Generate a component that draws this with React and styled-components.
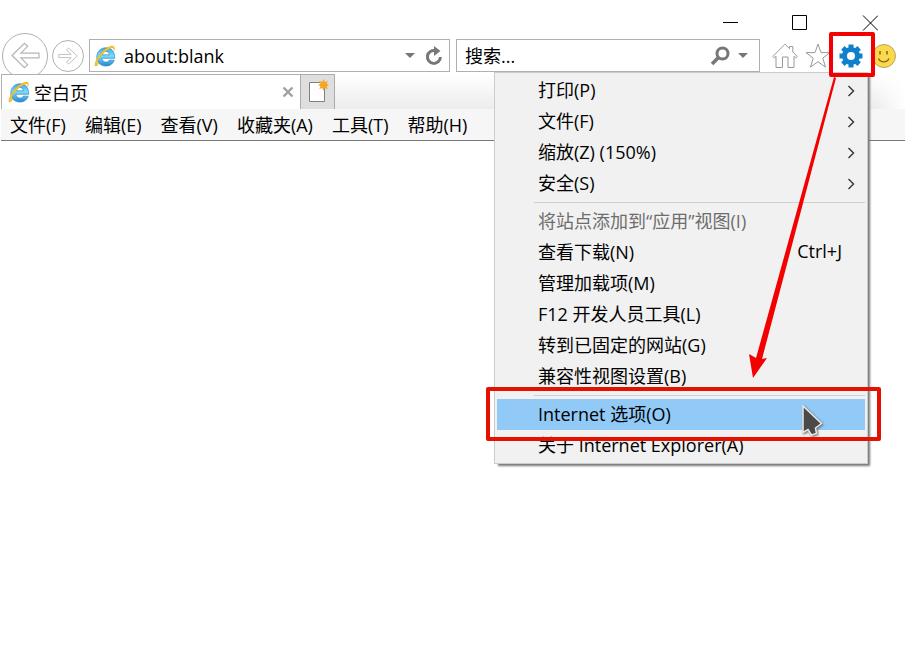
import React, { useState } from 'react';
import styled, { createGlobalStyle } from 'styled-components';

const GlobalStyle = createGlobalStyle`
  * {
    box-sizing: border-box;
  }

  body {
    margin: 0;
    background: #fff;
  }

  body, button, input {
    font-family: 'Open Sans', 'Noto Sans CJK SC', sans-serif;
    font-size: 18px;
    color: #000;
  }

  button {
    padding: 0;
    border: none;
    background: none;
  }

  svg {
    display: block;
    flex-shrink: 0;
  }
`;

const Window = styled.div`
  min-height: 100vh;
  padding: 0 1px;
  background: #fff;
  overflow: hidden;
`;

const TitleBar = styled.div`
  display: flex;
  justify-content: flex-end;
  height: 32px;
  padding-top: 14px;
`;

const WindowButton = styled.button`
  display: flex;
  align-items: center;
  justify-content: center;
  width: 70px;
  height: 18px;
`;

const NavBar = styled.div`
  position: relative;
  display: flex;
  align-items: center;
  height: 42px;
  padding: 5px 5px 0 1px;
`;

const RoundButton = styled.button`
  display: flex;
  align-items: center;
  justify-content: center;
  flex-shrink: 0;
  width: ${props => props.$size}px;
  height: ${props => props.$size}px;
  margin-right: 4px;
  border: 1px solid #b0b0b0;
  border-radius: 50%;
`;

const Field = styled.div`
  display: flex;
  align-items: center;
  flex: ${props => props.$size} 1 ${props => props.$size}px;
  min-width: 0;
  height: 33px;
  border: 1px solid #b0b0b0;
  background: #fff;
`;

const AddressField = styled(Field)`
  margin-left: 1px;
  padding: 0 2px 0 4px;
`;

const SearchField = styled(Field)`
  margin-left: 6px;
  padding: 0 6px 0 8px;
`;

const FieldInput = styled.input`
  flex: 1;
  min-width: 0;
  height: 28px;
  padding: 0;
  border: none;
  outline: none;
  background: transparent;

  ${AddressField} & {
    padding-left: 8px;
  }

  &::placeholder {
    color: #000;
    opacity: 1;
  }
`;

const FieldButton = styled.button`
  display: flex;
  align-items: center;
  justify-content: center;
  width: ${props => props.$width}px;
  height: 28px;
`;

const Tools = styled.div`
  display: flex;
  margin-left: 8px;
`;

const ToolButton = styled.button`
  position: relative;
  display: flex;
  align-items: center;
  justify-content: center;
  width: 33px;
  height: 32px;
`;

const GearMark = styled.span`
  position: absolute;
  inset: -8px -8px -5px -5px;
  z-index: 5;
  border: 4px solid #f40000;
  border-radius: 2px;
  pointer-events: none;
`;

const TabBar = styled.div`
  position: relative;
  display: flex;
  height: 35px;
  background:
    linear-gradient(to right, transparent calc(100% - 30px), #fff),
    linear-gradient(#fff, #ececec);
`;

const Tab = styled.div`
  display: flex;
  align-items: center;
  width: 299px;
  padding: 0 6px;
  border: 1px solid #b0b0b0;
  border-width: 1px 0 0 1px;
  background: #fff;
`;

const TabTitle = styled.span`
  flex: 1;
  margin-left: 4px;
`;

const NewTab = styled.button`
  display: flex;
  align-items: center;
  justify-content: center;
  width: 35px;
  border: 1px solid #ababab;
  border-bottom: none;
  background: #dedede;
`;

const MenuBar = styled.nav`
  display: flex;
  align-items: center;
  gap: 19px;
  height: 32px;
  padding: 1px 0 0 9px;
  border-bottom: 1px solid #777;
  background: #f6f6f6;
`;

const MenuBarItem = styled.button`
  line-height: 30px;
  white-space: nowrap;
`;

const Menu = styled.ul`
  position: absolute;
  top: 40px;
  right: 37px;
  z-index: 3;
  width: 374px;
  margin: 0;
  padding: 2px;
  border: 1px solid #ccc;
  background: #f1f1f1;
  box-shadow: 3px 3px 2px -1px #777;
  list-style: none;
`;

const MenuRow = styled.li`
  position: relative;
`;

const MenuItem = styled.button`
  display: flex;
  align-items: center;
  justify-content: space-between;
  width: 100%;
  height: 31px;
  padding: 0 ${props => (props.$submenu ? 10 : 23)}px 0 41px;
  background: ${props => (props.$selected ? '#91c9f7' : 'transparent')};
  white-space: nowrap;

  &:disabled {
    color: #6d6d6d;
  }
`;

const MenuText = styled.span`
  padding-bottom: 3px;
`;

const Separator = styled.li`
  height: 7px;
  margin-left: 37px;
  padding-top: 3px;

  &::before {
    content: '';
    display: block;
    height: 1px;
    background: #d0d0d0;
  }
`;

const RowMark = styled.span`
  position: absolute;
  inset: -12px -16px -11px -11px;
  z-index: 5;
  border: 4px solid #e41000;
  border-radius: 2px;
  pointer-events: none;
`;

const Pointer = styled.svg`
  position: absolute;
  top: 5px;
  right: 40px;
  z-index: 4;
  filter: drop-shadow(1px 1px 1px #666);
`;

const Arrow = styled.svg`
  position: absolute;
  top: 3px;
  right: 30px;
  z-index: 4;
  pointer-events: none;
`;

const menuBarItems = ['文件(F)', '编辑(E)', '查看(V)', '收藏夹(A)', '工具(T)', '帮助(H)'];

const toolsMenu = [
  { label: '打印(P)', submenu: true },
  { label: '文件(F)', submenu: true },
  { label: '缩放(Z) (150%)', submenu: true },
  { label: '安全(S)', submenu: true },
  { separator: true },
  { label: '将站点添加到“应用”视图(I)', disabled: true },
  { label: '查看下载(N)', shortcut: 'Ctrl+J' },
  { label: '管理加载项(M)' },
  { label: 'F12 开发人员工具(L)' },
  { label: '转到已固定的网站(G)' },
  { label: '兼容性视图设置(B)' },
  { separator: true },
  { label: 'Internet 选项(O)', selected: true },
  { label: '关于 Internet Explorer(A)' }
];

const BrowserLogo = () => (
  <svg width="22" height="24" viewBox="0 0 24 26" aria-hidden="true">
    <defs>
      <linearGradient id="logoBlue" x1="0" y1="0" x2="0" y2="1">
        <stop offset="0" stopColor="#3fa9e0" />
        <stop offset="0.45" stopColor="#7bdcff" />
        <stop offset="1" stopColor="#2387cc" />
      </linearGradient>
    </defs>
    <path
      d="M22.5 15.5H8.6c.3 2.7 2 4.1 4.4 4.1 1.9 0 3-.8 3.7-2.1h5.4c-1.3 4-4.7 6.5-9.2 6.5C7.2 24 3 20 3 14.2 3 8.3 7.2 4 13 4c6 0 10 4.4 9.5 11.5zM8.7 11.7h8.1c-.3-2.3-1.700-3.700-4-3.700-2.200 0-3.700 1.400-4.100 3.700z"
      fill="url(#logoBlue)"
      stroke="#2b86bd"
      strokeWidth="0.7"
    />
    <path
      d="M5.8 20.5C3.5 23.5 1.7 24.8 1.1 23.6.3 21.5 3.2 14.6 8.2 9.3 13.5 3.7 19.5.8 21.6 2.6c1 .9.9 2.7.1 4.6.1-1.800-.2-2.600-1-2.900C18.5 3.5 13.8 6.3 9.3 11c-4 4.1-6.2 8.3-5.6 9.6.3.6 1 .5 2.1-.1z"
      fill="#f7c52e"
      stroke="#dfa21d"
      strokeWidth="0.4"
    />
  </svg>
);

const Caret = () => (
  <svg width="10" height="5" viewBox="0 0 10 5" aria-hidden="true">
    <path d="M0 0h10L5 5z" fill="#777" />
  </svg>
);

const HollowArrow = ({ width, height, flip }) => (
  <svg width={width} height={height} viewBox="0 0 28 28" preserveAspectRatio="none" aria-hidden="true">
    <path
      d="M1 14L13 1.5l3 3L9.5 11.5H27v5H9.5l6.5 7-3 3z"
      fill="#fff"
      stroke="#b5b5b5"
      strokeWidth="1.2"
      transform={flip ? 'translate(28 0) scale(-1 1)' : undefined}
    />
  </svg>
);

const App = () => {
  const [address, setAddress] = useState('about:blank');
  const [query, setQuery] = useState('');

  return (
    <Window>
      <GlobalStyle />
      <TitleBar>
        <WindowButton aria-label="最小化">
          <svg width="16" height="16" viewBox="0 0 16 16">
            <path d="M1 7.5h15" stroke="#000" />
          </svg>
        </WindowButton>
        <WindowButton aria-label="最大化">
          <svg width="16" height="16" viewBox="0 0 16 16">
            <path d="M.5.5h14v14H.5z" fill="none" stroke="#000" />
          </svg>
        </WindowButton>
        <WindowButton aria-label="关闭">
          <svg width="16" height="16" viewBox="0 0 16 16">
            <path d="M1 .5l15 15M16 .5l-15 15" stroke="#000" />
          </svg>
        </WindowButton>
      </TitleBar>

      <NavBar>
        <RoundButton $size={46} aria-label="后退">
          <HollowArrow width={29} height={27} />
        </RoundButton>
        <RoundButton $size={32} aria-label="前进">
          <HollowArrow width={20} height={18} flip />
        </RoundButton>

        <AddressField $size={361}>
          <BrowserLogo />
          <FieldInput
            aria-label="地址"
            value={address}
            onChange={(e) => setAddress(e.target.value)}
          />
          <FieldButton $width={22} aria-label="显示历史记录">
            <Caret />
          </FieldButton>
          <FieldButton $width={26} aria-label="刷新">
            <svg width="18" height="20" viewBox="0 0 18 20">
              <path d="M10.5 4.6A6.5 6.5 0 1 0 15.4 11" fill="none" stroke="#777" strokeWidth="3" />
              <path d="M9 0l6.5 5-6.5 5z" fill="#777" />
            </svg>
          </FieldButton>
        </AddressField>

        <SearchField $size={304}>
          <FieldInput
            aria-label="搜索"
            placeholder="搜索..."
            value={query}
            onChange={(e) => setQuery(e.target.value)}
          />
          <FieldButton $width={26} aria-label="搜索">
            <svg width="20" height="20" viewBox="0 0 20 20">
              <circle cx="12.5" cy="7.5" r="5.5" fill="none" stroke="#777" strokeWidth="3" />
              <path d="M8.5 11.5L2 18" stroke="#777" strokeWidth="3.5" />
            </svg>
          </FieldButton>
          <FieldButton $width={20} aria-label="搜索选项">
            <Caret />
          </FieldButton>
        </SearchField>

        <Tools>
          <ToolButton aria-label="主页">
            <svg width="26" height="26" viewBox="0 0 26 26">
              <path
                d="M.8 13.5L13 1.2l4.5 4.5V3.5h3.3V9l4.5 4.5-1.6 1.3-1.7-1.5V24.5h-6V14h-5.5v10.5H4V13.3l-1.7 1.5z"
                fill="#fff"
                stroke="#999"
              />
            </svg>
          </ToolButton>
          <ToolButton aria-label="收藏夹">
            <svg width="26" height="26" viewBox="0 0 26 26">
              <path
                d="M13 1l3 8.6h9l-7.2 5.5 2.7 9L13 18.7l-7.5 5.4 2.7-9L1 9.6h9z"
                fill="#fff"
                stroke="#999"
              />
            </svg>
          </ToolButton>
          <ToolButton aria-label="工具" aria-haspopup="menu" aria-expanded="true">
            <svg width="24" height="24" viewBox="0 0 24 24">
              <g fill="#1080cc">
                {[0, 45, 90, 135].map((angle) => (
                  <rect
                    key={angle}
                    x="9.5"
                    y="0.5"
                    width="5"
                    height="23"
                    transform={`rotate(${angle} 12 12)`}
                  />
                ))}
                <circle cx="12" cy="12" r="9" />
              </g>
              <circle cx="12" cy="12" r="4" fill="#fff" />
            </svg>
            <GearMark />
          </ToolButton>
          <ToolButton aria-label="发送反馈">
            <svg width="26" height="26" viewBox="0 0 26 26">
              <circle cx="13" cy="13" r="11.5" fill="#fbd94b" stroke="#a8925a" strokeWidth="0.8" />
              <path d="M9 8v3.5M16 8v3.5" stroke="#7b6526" strokeWidth="1.5" />
              <path d="M7.5 15.5c2 4.5 8.5 4.5 10.5 0" fill="none" stroke="#7b6526" strokeWidth="1.3" />
            </svg>
          </ToolButton>
        </Tools>

        <Menu role="menu">
          {toolsMenu.map((item, index) =>
            item.separator ? (
              <Separator key={index} role="separator" />
            ) : (
              <MenuRow key={item.label} role="none">
                <MenuItem
                  role="menuitem"
                  disabled={item.disabled}
                  $submenu={item.submenu}
                  $selected={item.selected}
                >
                  <MenuText>{item.label}</MenuText>
                  {item.shortcut && <MenuText>{item.shortcut}</MenuText>}
                  {item.submenu && (
                    <svg width="8" height="12" viewBox="0 0 8 12" aria-hidden="true">
                      <path d="M1.5 1l5 5-5 5" fill="none" stroke="#333" strokeWidth="1.4" />
                    </svg>
                  )}
                </MenuItem>
                {item.selected && (
                  <>
                    <Pointer width="24" height="34" viewBox="0 0 24 34" aria-hidden="true">
                      <path
                        d="M2 2v26.5l5-3 3.500 5.500 5-1.500-1-5.500 6-4.500z"
                        fill="#4a4a4a"
                        stroke="#e8e8e8"
                        strokeWidth="1.5"
                      />
                    </Pointer>
                    <RowMark />
                  </>
                )}
              </MenuRow>
            )
          )}
          <Arrow width="90" height="304" viewBox="0 0 90 304" aria-hidden="true">
            <path d="M87 1l2 1L15 283l5-1L6 302 2 278l7 4z" fill="#f40000" />
          </Arrow>
        </Menu>
      </NavBar>

      <TabBar>
        <Tab>
          <BrowserLogo />
          <TabTitle>空白页</TabTitle>
          <FieldButton $width={12} aria-label="关闭选项卡">
            <svg width="12" height="12" viewBox="0 0 12 12">
              <path d="M1.5 1.5l9 9M10.5 1.5l-9 9" stroke="#a0a0a0" strokeWidth="2.4" />
            </svg>
          </FieldButton>
        </Tab>
        <NewTab aria-label="新建选项卡">
          <svg width="22" height="26" viewBox="0 0 22 26">
            <path d="M2.5 3.5h15v19h-15z" fill="#fff" stroke="#808080" />
            <path
              d="M16.5 0l1.3 3 3-1.2-1.2 3 2.4 1.2-2.4 1.3 1.2 2.8-3-1-1.3 2.9-1.2-2.9-3 1 1.2-2.8L11 6l2.5-1.2-1.2-3 3 1.2z"
              fill="#f5a623"
            />
          </svg>
        </NewTab>
      </TabBar>

      <MenuBar aria-label="菜单栏">
        {menuBarItems.map((label) => (
          <MenuBarItem key={label}>{label}</MenuBarItem>
        ))}
      </MenuBar>
    </Window>
  );
};

export default App;
